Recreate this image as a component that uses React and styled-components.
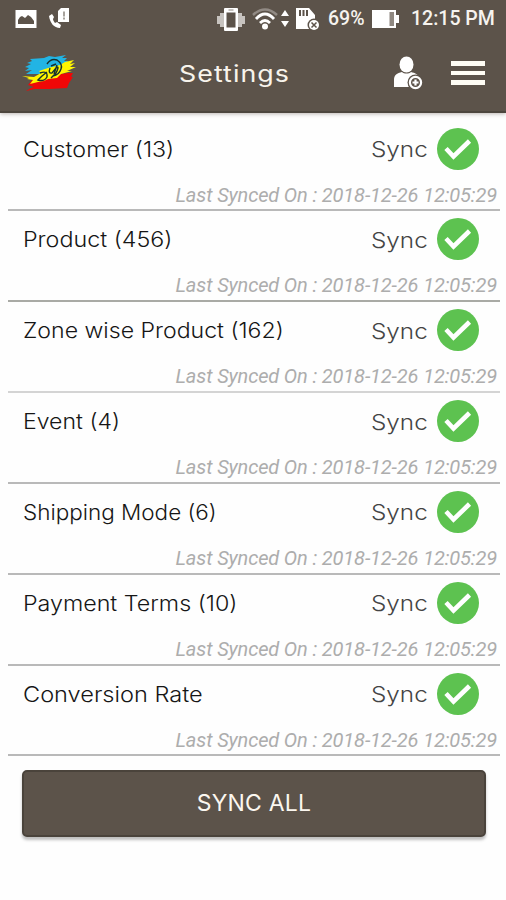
import React from 'react';
import styled, { createGlobalStyle } from 'styled-components';

const items = [
    { name: 'Customer (13)', stretch: 1.107, line: '#b9b9b9' },
    { name: 'Product (456)', stretch: 1.109, line: '#a9aaa5' },
    { name: 'Zone wise Product (162)', stretch: 1.1, line: '#d4d4d4' },
    { name: 'Event (4)', stretch: 1.098, line: '#b9b9b9' },
    { name: 'Shipping Mode (6)', stretch: 1.07, line: '#b9b9b9' },
    { name: 'Payment Terms (10)', stretch: 1.107, line: '#b9b9b9' },
    { name: 'Conversion Rate', stretch: 1.122, line: '#b9b9b9' },
];

const PictureIcon = () => (
    <svg width="22" height="20" viewBox="0 0 22 20">
        <rect x="0.5" y="1" width="21" height="18" fill="#fff" />
        <path d="M3 15V11l2-3 2-1 3 2 3-3 3 2 3 4v3z" fill="#5c534a" />
    </svg>
);

const CallIcon = () => (
    <svg width="22" height="23" viewBox="0 0 22 23">
        <path d="M1 9c1 7 5 12 11 12l1-3-4-3-2 1c-1-1-2-3-2-4l1-2-2-3z" fill="#fff" />
        <path d="M13 1h8v14H10V4z" fill="#fff" />
        <path d="M16 4.500v5M16 10.500v2" stroke="#8b847c" strokeWidth="1.500" />
    </svg>
);

const VibrateIcon = () => (
    <svg width="28" height="24" viewBox="0 0 28 24">
        <path d="M0 9h3v8H0zM3 6h4v14H3zM21 6h4v14h-4zM25 9h3v8h-3z" fill="#c7c3bf" />
        <rect x="7" y="1" width="14" height="23" rx="1" fill="#fff" />
        <rect x="9.500" y="5.500" width="9" height="15" fill="#5c534a" />
        <path d="M11.500 3h5" stroke="#8b847c" strokeWidth="1" />
    </svg>
);

const WifiIcon = () => (
    <svg width="37" height="24" viewBox="0 0 37 24" fill="none">
        <path d="M1 8Q13-3 25 8" stroke="#918a84" strokeWidth="2.500" />
        <path d="M4 12Q13 2 22 12M8 16q5-5 10 0" stroke="#fff" strokeWidth="2.800" />
        <circle cx="13" cy="19.500" r="3" fill="#fff" />
        <path d="M29 9l4-6 4 6zM29 14h8l-4 6z" fill="#fff" />
    </svg>
);

const SdIcon = () => (
    <svg width="24" height="24" viewBox="0 0 24 24">
        <path d="M0 1h13l6 7v14H0z" fill="#fff" />
        <path d="M4 3v6M7.500 3v6M11 3v6" stroke="#5c534a" strokeWidth="2" />
        <circle cx="18" cy="18" r="6.500" fill="#5c534a" />
        <circle cx="18" cy="18" r="5" fill="#fff" />
        <path d="M15.500 15.500l5 5M20.500 15.500l-5 5" stroke="#5c534a" strokeWidth="1.500" />
    </svg>
);

const BatteryIcon = () => (
    <svg width="28" height="20" viewBox="0 0 28 20">
        <path d="M0 1h24v5h3v8h-3v5H0z" fill="#fff" />
        <rect x="17.500" y="3" width="4.500" height="14" fill="#8f8881" />
    </svg>
);

const Logo = () => (
    <svg width="54" height="38" viewBox="0 0 54 38">
        <path d="M8 5l14-1 5-2 6 1 11-2-4 3 5 0-3 3 4 0-6 10-17 3-19 0 6-4-7 1 4-3-4-1 6-3-4-1 5-2z" fill="#22b4e4" />
        <path d="M10 26l23-5 13-2 5 0-2 4 2 0-4 6-2 5-18 1-14 0-9 2 5-3 3-1-6-2z" fill="#f00707" />
        <path d="M0 22l12 1 7-4-2-2 9-3 12-3 5-3 9-2-4 4 5-1-5 4 6 0-9 4 5 0-11 3-4 4-9 1-4 2-6 1-8 2 3-4-6-1 2-1z" fill="#fff600" />
        <path d="M25 10q4-6 10-4 6 4 4 9-2 6-8 7M18 19q8-3 7 4-3 5-9 3l4-4M28 14q-2 6 2 5l4-5q4-3 0 5l-5 5M34 10l-5 2M25 18l-5 4M32 20l3-9" fill="none" stroke="#17312e" strokeWidth="1.400" />
    </svg>
);

const AddUserIcon = () => (
    <svg width="30" height="34" viewBox="0 0 30 34">
        <ellipse cx="12.500" cy="8.500" rx="7" ry="8" fill="#fff" />
        <path d="M0 31V24c0-5 3-7 8-8 2 2 7 2 9 0 4 1 7 2 8 6v9z" fill="#fff" />
        <circle cx="21.500" cy="26.500" r="8" fill="#5c534a" />
        <circle cx="21.500" cy="26.500" r="5.600" fill="#5c534a" stroke="#fff" strokeWidth="2.200" />
        <path d="M18.500 26.500h6M21.500 23.500v6" stroke="#fff" strokeWidth="2.200" />
    </svg>
);

const CheckIcon = () => (
    <svg width="42" height="42" viewBox="0 0 42 42">
        <circle cx="21" cy="21" r="21" fill="#5dc250" />
        <path d="M9 20.500l7.500 8L32.500 13" fill="none" stroke="#fff" strokeWidth="4.600" />
    </svg>
);

const App = () => {
    return (
        <>
            <GlobalStyle />
            <Screen>
                <Header>
                    <StatusBar>
                        <StatusGroup $gap={11}>
                            <PictureIcon />
                            <CallIcon />
                        </StatusGroup>
                        <StatusGroup $gap={7}>
                            <VibrateIcon />
                            <WifiIcon />
                            <SdIcon />
                            <StatusText $width={38}>69%</StatusText>
                            <BatteryIcon />
                            <Clock $width={85}>12:15 PM</Clock>
                        </StatusGroup>
                    </StatusBar>
                    <Toolbar>
                        <LogoBox><Logo /></LogoBox>
                        <Title>Settings</Title>
                        <IconButton aria-label="Add user"><AddUserIcon /></IconButton>
                        <MenuButton aria-label="Menu">
                            <MenuLine />
                            <MenuLine />
                            <MenuLine />
                        </MenuButton>
                    </Toolbar>
                </Header>
                <SyncList>
                    {items.map((item) => (
                        <SyncItem key={item.name} $line={item.line}>
                            <ItemRow>
                                <ItemName $stretch={item.stretch}>{item.name}</ItemName>
                                <SyncLabel>Sync</SyncLabel>
                                <CheckIcon />
                            </ItemRow>
                            <LastSynced>Last Synced On : 2018-12-26 12:05:29</LastSynced>
                        </SyncItem>
                    ))}
                </SyncList>
                <SyncAll>SYNC ALL</SyncAll>
            </Screen>
        </>
    );
};

export default App;

const GlobalStyle = createGlobalStyle`
* {
    box-sizing: border-box;
}
body {
    margin: 0;
    background: #fefefe;
}
svg {
    display: block;
    flex-shrink: 0;
}
`;

const Screen = styled.div`
display: flex;
flex-direction: column;
height: 900px;
overflow: hidden;
font-family: Inter, sans-serif;
`;

const Header = styled.header`
height: 113px;
flex-shrink: 0;
background: #5c534a;
border-bottom: 2px solid #4d463e;
box-shadow: 0 1px 4px rgba(70, 50, 40, 0.35);
`;

const StatusBar = styled.div`
height: 37px;
padding: 0 10px 0 15px;
display: flex;
align-items: center;
justify-content: space-between;
`;

const StatusGroup = styled.div`
display: flex;
align-items: center;
gap: ${(props) => props.$gap}px;
`;

const StatusText = styled.span`
width: ${(props) => props.$width}px;
padding: 1px 0 0 1px;
font: 500 19.5px/24px Roboto, sans-serif;
color: #f6f3ef;
white-space: nowrap;
`;

const Clock = styled(StatusText)`
margin-left: 4px;
padding-left: 0;
`;

const Toolbar = styled.div`
height: 74px;
display: flex;
align-items: center;
padding: 0 21px 2px 23px;
`;

const LogoBox = styled.div`
width: 156px;
margin-left: -1px;
margin-right: 1px;
`;

const Title = styled.h1`
flex: 1;
margin: 0;
padding-top: 2px;
font-size: 23px;
font-weight: 400;
letter-spacing: 0.9px;
color: #f8f4ec;
transform: scaleX(1.165);
transform-origin: left;
`;

const IconButton = styled.button`
padding: 0;
border: 0;
background: none;
margin-right: 27px;
`;

const MenuButton = styled.button`
display: flex;
flex-direction: column;
gap: 5px;
padding: 0;
border: 0;
background: none;
`;

const MenuLine = styled.span`
width: 34px;
height: 4.5px;
background: #fffdf5;
`;

const SyncList = styled.ul`
list-style: none;
margin: 7.5px 6px 0 8px;
padding: 0;
`;

const SyncItem = styled.li`
height: 90.85px;
border-bottom: 2px solid ${(props) => props.$line};
`;

const ItemRow = styled.div`
display: flex;
align-items: center;
height: 56px;
padding: 0 21px 0 15px;
`;

const ItemName = styled.span`
flex: 1;
padding-top: 1px;
font-size: 21px;
font-weight: 300;
color: #161616;
white-space: nowrap;
transform: scaleX(${(props) => props.$stretch});
transform-origin: left;
`;

const SyncLabel = styled.span`
width: 66px;
margin-left: -1px;
padding-top: 1px;
font-size: 21.5px;
font-weight: 300;
color: #444;
transform: scaleX(1.13);
transform-origin: left;
`;

const LastSynced = styled.p`
margin: 6px 3px 0 0;
text-align: right;
font: italic 400 20px/24px Roboto, sans-serif;
letter-spacing: -0.14px;
color: #adadad;
`;

const SyncAll = styled.button`
height: 67px;
flex-shrink: 0;
margin: 13.5px 20px 0 22px;
border: 2px solid #4a433b;
border-radius: 5px;
background: #5c534a;
box-shadow: 0 3px 3px rgba(0, 0, 0, 0.25);
font: 400 23px/28px Inter, sans-serif;
letter-spacing: 0.2px;
color: #fbf7f0;
`;
